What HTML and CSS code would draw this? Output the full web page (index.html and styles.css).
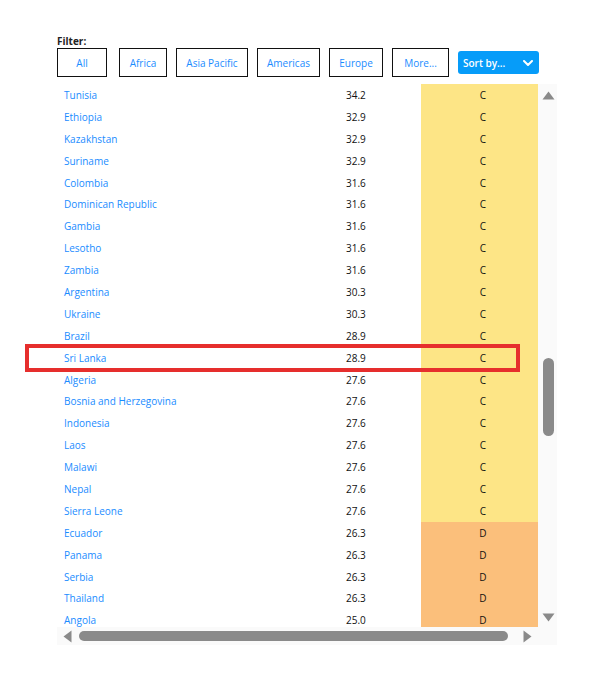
FILE: index.html
```html
<!DOCTYPE html>
<html>
<head>
<meta charset="utf-8">
<link rel="stylesheet" href="styles.css">
</head>
<body>
<div class="widget">
  <div class="filter-label">Filter:</div>
  <div class="filters">
    <button class="fbtn w-all">All</button>
    <button class="fbtn w-africa">Africa</button>
    <button class="fbtn w-asia">Asia Pacific</button>
    <button class="fbtn w-americas">Americas</button>
    <button class="fbtn w-europe">Europe</button>
    <button class="fbtn w-more">More...</button>
    <button class="sort">Sort by...<svg class="chev" width="10" height="6" viewBox="0 0 10 6"><path d="M1 1 L5 5 L9 1" fill="none" stroke="#fff" stroke-width="2" stroke-linecap="round" stroke-linejoin="round"/></svg></button>
  </div>
  <div class="table-wrap">
    <div class="rows">
      <div class="row c"><span class="name">Tunisia</span><span class="val">34.2</span><span class="grade">C</span></div>
      <div class="row c"><span class="name">Ethiopia</span><span class="val">32.9</span><span class="grade">C</span></div>
      <div class="row c"><span class="name">Kazakhstan</span><span class="val">32.9</span><span class="grade">C</span></div>
      <div class="row c"><span class="name">Suriname</span><span class="val">32.9</span><span class="grade">C</span></div>
      <div class="row c"><span class="name">Colombia</span><span class="val">31.6</span><span class="grade">C</span></div>
      <div class="row c"><span class="name">Dominican Republic</span><span class="val">31.6</span><span class="grade">C</span></div>
      <div class="row c"><span class="name">Gambia</span><span class="val">31.6</span><span class="grade">C</span></div>
      <div class="row c"><span class="name">Lesotho</span><span class="val">31.6</span><span class="grade">C</span></div>
      <div class="row c"><span class="name">Zambia</span><span class="val">31.6</span><span class="grade">C</span></div>
      <div class="row c"><span class="name">Argentina</span><span class="val">30.3</span><span class="grade">C</span></div>
      <div class="row c"><span class="name">Ukraine</span><span class="val">30.3</span><span class="grade">C</span></div>
      <div class="row c"><span class="name">Brazil</span><span class="val">28.9</span><span class="grade">C</span></div>
      <div class="row c"><span class="name">Sri Lanka</span><span class="val">28.9</span><span class="grade">C</span></div>
      <div class="row c"><span class="name">Algeria</span><span class="val">27.6</span><span class="grade">C</span></div>
      <div class="row c"><span class="name">Bosnia and Herzegovina</span><span class="val">27.6</span><span class="grade">C</span></div>
      <div class="row c"><span class="name">Indonesia</span><span class="val">27.6</span><span class="grade">C</span></div>
      <div class="row c"><span class="name">Laos</span><span class="val">27.6</span><span class="grade">C</span></div>
      <div class="row c"><span class="name">Malawi</span><span class="val">27.6</span><span class="grade">C</span></div>
      <div class="row c"><span class="name">Nepal</span><span class="val">27.6</span><span class="grade">C</span></div>
      <div class="row c"><span class="name">Sierra Leone</span><span class="val">27.6</span><span class="grade">C</span></div>
      <div class="row d"><span class="name">Ecuador</span><span class="val">26.3</span><span class="grade">D</span></div>
      <div class="row d"><span class="name">Panama</span><span class="val">26.3</span><span class="grade">D</span></div>
      <div class="row d"><span class="name">Serbia</span><span class="val">26.3</span><span class="grade">D</span></div>
      <div class="row d"><span class="name">Thailand</span><span class="val">26.3</span><span class="grade">D</span></div>
      <div class="row d"><span class="name">Angola</span><span class="val">25.0</span><span class="grade">D</span></div>
    </div>
    <div class="vscroll">
      <svg class="arrow-up" width="13" height="9" viewBox="0 0 13 9"><path d="M6.5 0.5 L12.5 8.5 L0.5 8.5 Z" fill="#8a8a8a"/></svg>
      <div class="vtrack"><div class="vthumb"></div></div>
      <svg class="arrow-down" width="13" height="9" viewBox="0 0 13 9"><path d="M0.5 0.5 L12.5 0.5 L6.5 8.5 Z" fill="#8a8a8a"/></svg>
    </div>
    <div class="hscroll">
      <svg width="9" height="13" viewBox="0 0 9 13"><path d="M8.5 0.5 L8.5 12.5 L0.5 6.5 Z" fill="#8a8a8a"/></svg>
      <div class="htrack"><div class="hthumb"></div></div>
      <svg width="9" height="13" viewBox="0 0 9 13"><path d="M0.5 0.5 L8.5 6.5 L0.5 12.5 Z" fill="#8a8a8a"/></svg>
    </div>
    <div class="highlight"></div>
  </div>
</div>
</body>
</html>
```

FILE: styles.css
```css
* { box-sizing: border-box; }
body {
  margin: 0;
  background: #fff;
  font-family: "Open Sans", "Noto Sans", sans-serif;
  font-size: 10px;
  color: #111;
}
.widget {
  margin-left: 57px;
  width: 500px;
  padding-top: 34px;
}
.filter-label {
  font-weight: 700;
  font-size: 10px;
  line-height: 14px;
  color: #222;
}
.filters {
  display: flex;
  align-items: center;
  height: 29px;
}
.fbtn {
  height: 29px;
  border: 1px solid #111;
  background: #fff;
  color: #1a8cff;
  font-family: "Open Sans", sans-serif;
  font-size: 10px;
  padding: 0;
  margin: 0 9px 0 0;
}
.w-all { width: 50px; margin-right: 12px; }
.w-africa { width: 48px; }
.w-asia { width: 72px; }
.w-americas { width: 63px; }
.w-europe { width: 54px; }
.w-more { width: 57px; }
.sort {
  width: 81px;
  height: 23px;
  border: none;
  border-radius: 3px;
  background: #069cf9;
  color: #fff;
  font-family: "Open Sans", sans-serif;
  font-size: 10px;
  font-weight: 600;
  padding: 0 6px 0 5px;
  display: flex;
  align-items: center;
  justify-content: space-between;
}
.table-wrap {
  position: relative;
  margin-top: 7px;
  display: grid;
  grid-template-columns: 481px 19px;
  grid-template-rows: 543px 18px;
}
.rows {
  overflow: hidden;
}
.row {
  display: grid;
  grid-template-columns: 282px 82px 117px;
  height: 21.9px;
}
.row span {
  display: flex;
  align-items: center;
  white-space: nowrap;
}
.name { padding-left: 7px; color: #1a8cff; }
.val { padding-left: 7px; color: #111; }
.grade { justify-content: center; padding-left: 7px; color: #111; }
.row.c .grade { background: #fde586; }
.row.d .grade { background: #fbbf7b; }
.vscroll {
  background: #fafafa;
  display: flex;
  flex-direction: column;
  align-items: center;
  padding: 7px 0 5px 2px;
}
.vtrack {
  flex: 1;
  position: relative;
  width: 11px;
}
.vthumb {
  position: absolute;
  left: 0;
  top: 258px;
  width: 11px;
  height: 78px;
  border-radius: 6px;
  background: #8a8a8a;
}
.hscroll {
  grid-column: 1 / 3;
  background: #fafafa;
  display: flex;
  align-items: center;
  padding: 0 25px 0 6px;
  gap: 7px;
}
.htrack {
  flex: 1;
  height: 10px;
  position: relative;
}
.hthumb {
  position: absolute;
  left: 0;
  top: 0;
  width: 429px;
  height: 10px;
  border-radius: 5px;
  background: #8a8a8a;
}
.highlight {
  position: absolute;
  left: -32px;
  top: 260px;
  width: 495px;
  height: 28px;
  border: 4px solid #e62e2d;
  pointer-events: none;
}
```
